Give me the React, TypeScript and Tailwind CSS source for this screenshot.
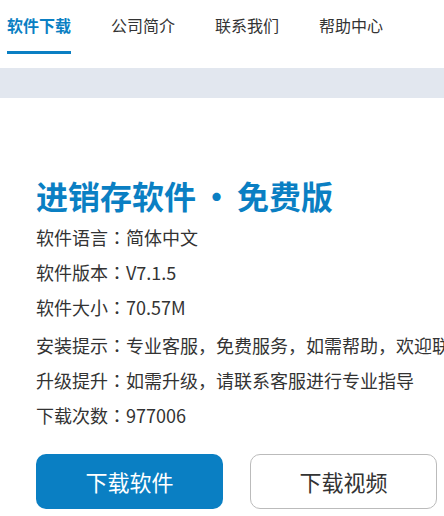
import React from "react";

const font = { fontFamily: '"Noto Sans CJK SC", "Noto Sans", sans-serif' };

function Colon() {
  return (
    <span style={{ fontFamily: '"Noto Sans CJK TC", sans-serif' }}>：</span>
  );
}

function Line({ label, value, extra = "" }: { label: string; value: string; extra?: string }) {
  return (
    <div className={"h-[35px] leading-[35px] whitespace-nowrap " + extra}>
      {label}
      <Colon />
      {value}
    </div>
  );
}

export default function App() {
  const navItems = ["软件下载", "公司简介", "联系我们", "帮助中心"];
  return (
    <div className="w-[444px] h-[516px] overflow-hidden bg-white" style={font}>
      <nav className="h-[68px] flex gap-[40px] pl-[7px]">
        {navItems.map((item, i) => (
          <div key={item} className="flex flex-col">
            <span
              className={
                i === 0
                  ? "text-[16px] leading-[50px] font-bold text-[#0a7fc3] whitespace-nowrap"
                  : "text-[16px] leading-[50px] text-[#333333] whitespace-nowrap"
              }
            >
              {item}
            </span>
            {i === 0 && <div className="mt-[1px] h-[3px] bg-[#0a7fc3]" />}
          </div>
        ))}
      </nav>
      <div className="h-[30px] bg-[#e2e7ef]" />
      <div className="px-[36px]">
        <h1 className="mt-[77px] text-[32px] leading-[40px] font-bold text-[#0a7fc3] whitespace-nowrap">
          进销存软件
          <span className="inline-block w-[41px] text-center">•</span>
          免费版
        </h1>
        <div className="mt-[5px] flex flex-col text-[18px] text-[#333333]">
          <Line label="软件语言" value="简体中文" />
          <Line label="软件版本" value="V7.1.5" />
          <Line label="软件大小" value="70.57M" />
          <Line label="安装提示" value="专业客服，免费服务，如需帮助，欢迎联系" extra="mt-[3px]" />
          <Line label="升级提升" value="如需升级，请联系客服进行专业指导" />
          <Line label="下载次数" value="977006" />
        </div>
        <div className="mt-[21px] flex gap-[27px]">
          <button className="shrink-0 w-[187px] h-[55px] rounded-[10px] bg-[#0a7fc3] text-white text-[22px] flex items-center justify-center">
            下载软件
          </button>
          <button className="shrink-0 w-[187px] h-[55px] rounded-[10px] bg-white border border-[#bbbbbb] text-[#333333] text-[22px] flex items-center justify-center">
            下载视频
          </button>
        </div>
      </div>
    </div>
  );
}
